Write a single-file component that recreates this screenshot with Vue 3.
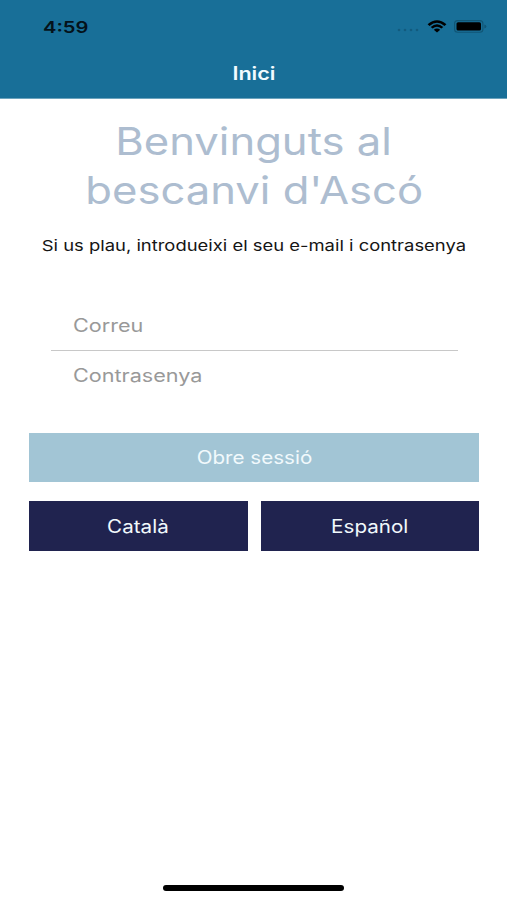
<script setup>
import { ref } from 'vue'

const email = ref('')
const password = ref('')
const titleLines = ['Benvinguts al', "bescanvi d'Ascó"]
const languages = ['Català', 'Español']
</script>

<template>
  <div class="screen">
    <header class="header">
      <div class="status">
        <span class="wide time">4:59</span>
        <div class="indicators">
          <svg class="dots" width="24" height="4" viewBox="0 0 24 4">
            <circle cx="3" cy="2" r="1.3" /><circle cx="9" cy="2" r="1.3" />
            <circle cx="15" cy="2" r="1.3" /><circle cx="21" cy="2" r="1.3" />
          </svg>
          <svg class="wifi" width="20" height="13" viewBox="0 0 20 13">
            <path d="M.6 4.2Q10-3.5 19.4 4.2L17.5 5.9Q10-.4 2.500 5.900Z" />
            <path d="M3.700 7Q10 1.500 16.300 7L14.400 8.600Q10 4.900 5.600 8.600Z" />
            <path d="M6.800 9.700Q10 7.100 13.200 9.700L10 12.500Z" />
          </svg>
          <svg class="battery" width="33" height="13" viewBox="0 0 33 13">
            <rect class="shell" x=".6" y=".6" width="28.300" height="11.600" rx="3" />
            <rect x="2.500" y="2.200" width="24.500" height="8.400" rx="1.600" />
            <path class="tip" d="M30.300 4.400Q32.400 5 32.400 6.400T30.300 8.400Z" />
          </svg>
        </div>
      </div>
      <div class="nav"><span class="wide nav-title">Inici</span></div>
    </header>

    <main class="content">
      <h1 class="title">
        <span v-for="line in titleLines" :key="line" class="wide">{{ line }}</span>
      </h1>
      <p class="hint"><span class="wide">Si us plau, introdueixi el seu e-mail i contrasenya</span></p>

      <form class="form" @submit.prevent>
        <div class="field first"><input v-model="email" type="email" placeholder="Correu" /></div>
        <div class="field"><input v-model="password" type="password" placeholder="Contrasenya" /></div>
        <button class="button login" type="submit"><span class="wide">Obre sessió</span></button>
        <div class="languages">
          <button v-for="name in languages" :key="name" class="button language" type="button">
            <span class="wide">{{ name }}</span>
          </button>
        </div>
      </form>
    </main>
    <div class="home"></div>
  </div>
</template>

<style>
body { margin: 0; background: #fff; }
</style>

<style scoped>
.screen {
  box-sizing: border-box;
  width: 507px;
  height: 900px;
  display: flex;
  flex-direction: column;
  overflow: hidden;
  background: #fff;
  font-family: Inter, "Liberation Sans", sans-serif;
}
.wide { display: inline-block; white-space: nowrap; transform: scaleX(1.2); }
.header {
  box-sizing: border-box;
  height: 99px;
  background: #186f98;
  border-bottom: 1px solid #6ba3bd;
}
.status {
  height: 49px;
  padding: 4px 20px 0 43px;
  box-sizing: border-box;
  display: flex;
  align-items: center;
  justify-content: space-between;
}
.time { font-size: 16px; font-weight: 600; color: #04121a; transform: scaleX(1.26); transform-origin: left; }
.indicators { display: flex; align-items: center; gap: 7px; }
.dots { fill: #125b7e; margin-top: 7px; }
.battery .shell { fill: none; stroke: #115675; stroke-width: 1.1; }
.battery .tip { fill: #115675; }
.nav { height: 49px; display: flex; align-items: center; justify-content: center; }
.nav-title { font-size: 18px; font-weight: 600; color: #f1fbff; }
.content { flex: 1; padding: 18px 28px 0 29px; }
.title {
  margin: 0;
  display: flex;
  flex-direction: column;
  align-items: center;
  font-size: 38px;
  line-height: 49px;
  font-weight: 400;
  color: #adbdd0;
}
.title .wide { transform: scaleX(1.147); }
.hint {
  margin: 21px 0 0;
  height: 20px;
  line-height: 20px;
  display: flex;
  justify-content: center;
  font-size: 15px;
  color: #151515;
}
.hint .wide { transform: scaleX(1.227); }
.form { padding-top: 45px; }
.field { height: 49px; margin: 0 21px 0 22px; padding-left: 22px; }
.field.first { border-bottom: 1px solid #c8c8c8; }
input {
  display: block;
  width: 300px;
  height: 49px;
  padding: 0;
  border: 0;
  outline: 0;
  background: none;
  font: 18px Inter, "Liberation Sans", sans-serif;
  transform: scaleX(1.2);
  transform-origin: left;
}
input::placeholder { color: #999; opacity: 1; }
.button {
  border: 0;
  padding: 0;
  height: 50px;
  font: 18px Inter, "Liberation Sans", sans-serif;
  color: #f1f9fc;
}
.button .wide { transform: scaleX(1.145); }
.login { display: block; width: 450px; height: 49px; margin-top: 33px; background: #a2c5d5; }
.languages { width: 450px; margin-top: 19px; display: grid; grid-template-columns: 1fr 1fr; gap: 13px; }
.language { background: #20234f; }
.home { width: 181px; height: 6px; border-radius: 3px; background: #000; margin: 0 auto 9px; }
</style>
